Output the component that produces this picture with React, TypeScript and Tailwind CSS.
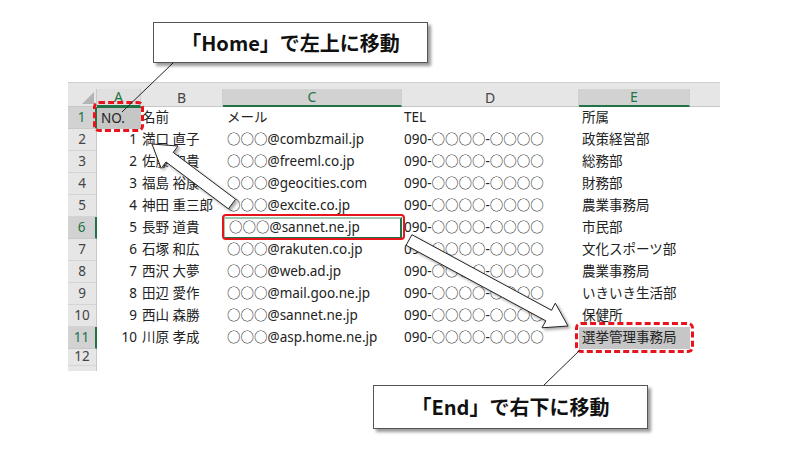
import React from "react";

const rows: [string, string, string, string, string][] = [
  ["NO.", "名前", "メール", "TEL", "所属"],
  ["1", "満口 直子", "○○○@combzmail.jp", "090-○○○○-○○○○", "政策経営部"],
  ["2", "佐藤 和貴", "○○○@freeml.co.jp", "090-○○○○-○○○○", "総務部"],
  ["3", "福島 裕康", "○○○@geocities.com", "090-○○○○-○○○○", "財務部"],
  ["4", "神田 重三郎", "○○○@excite.co.jp", "090-○○○○-○○○○", "農業事務局"],
  ["5", "長野 道貴", "○○○@sannet.ne.jp", "090-○○○○-○○○○", "市民部"],
  ["6", "石塚 和広", "○○○@rakuten.co.jp", "090-○○○○-○○○○", "文化スポーツ部"],
  ["7", "西沢 大夢", "○○○@web.ad.jp", "090-○○○○-○○○○", "農業事務局"],
  ["8", "田辺 愛作", "○○○@mail.goo.ne.jp", "090-○○○○-○○○○", "いきいき生活部"],
  ["9", "西山 森勝", "○○○@sannet.ne.jp", "090-○○○○-○○○○", "保健所"],
  ["10", "川原 孝成", "○○○@asp.home.ne.jp", "090-○○○○-○○○○", "選挙管理事務局"],
];

const cols = "grid grid-cols-[29px_44px_82px_179px_177px_111px_1fr]";

function arrow(tx: number, ty: number, hx: number, hy: number, sw = 6, hw = 14, hl = 22) {
  const dx = hx - tx;
  const dy = hy - ty;
  const len = Math.hypot(dx, dy);
  const ux = dx / len;
  const uy = dy / len;
  const px = -uy;
  const py = ux;
  const b = len - hl;
  const local: [number, number][] = [
    [0, -sw], [b, -sw], [b, -hw], [len, 0], [b, hw], [b, sw], [0, sw],
  ];
  return local
    .map(([a, p]) => `${(tx + a * ux + p * px).toFixed(1)},${(ty + a * uy + p * py).toFixed(1)}`)
    .join(" ");
}

function RowHead({ n, sel }: { n: string; sel?: boolean }) {
  return (
    <div
      className={
        sel
          ? "flex items-center justify-center bg-[#d2d2d2] text-[#217346] border-r-2 border-r-[#217346] border-b border-b-[#c8c8c8]"
          : "flex items-center justify-center bg-[#e6e6e6] text-[#444] border-r border-r-[#c8c8c8] border-b border-b-[#d4d4d4]"
      }
    >
      {n}
    </div>
  );
}

export default function App() {
  return (
    <div
      className="relative w-[800px] h-[450px] bg-white overflow-hidden text-[13.5px] text-[#222]"
      style={{ fontFamily: '"Noto Sans", "Noto Sans CJK JP", sans-serif' }}
    >
      {/* sheet */}
      <div className="ml-[68px] mt-[82px] w-[652px] h-[289px] overflow-hidden">
        <div className="h-[7px] bg-[#e6e6e6] border-t border-[#d0d0d0]" />
        <div className={`${cols} h-[18px] bg-[#e6e6e6] text-[#444] text-[14px] leading-none`}>
          <div className="relative border-r border-[#c8c8c8] border-b border-b-[#c8c8c8]">
            <svg className="absolute right-[2px] bottom-[2px]" width="12" height="12">
              <polygon points="12,0 12,12 0,12" fill="#b4b4b4" />
            </svg>
          </div>
          <div className="flex items-center justify-center text-[#217346] bg-[#e0e0e0] border-r border-[#d0d0d0] border-b-2 border-b-[#217346]">A</div>
          <div className="flex items-center justify-center border-r border-[#d0d0d0] border-b border-b-[#c8c8c8]">B</div>
          <div className="flex items-center justify-center text-[#217346] bg-[#d2d2d2] border-r border-[#d0d0d0] border-b-2 border-b-[#217346]">C</div>
          <div className="flex items-center justify-center border-r border-[#d0d0d0] border-b border-b-[#c8c8c8]">D</div>
          <div className="flex items-center justify-center text-[#217346] bg-[#d2d2d2] border-r border-[#d0d0d0] border-b-2 border-b-[#217346]">E</div>
          <div className="border-b border-b-[#c8c8c8]" />
        </div>
        {rows.map((r, i) => {
          const rn = i + 1;
          const sel = rn === 1 || rn === 6 || rn === 11;
          return (
            <div key={rn} className={`${cols} h-[22px] leading-none`}>
              <RowHead n={String(rn)} sel={sel} />
              <div
                className={`flex items-center whitespace-nowrap ${
                  rn === 1 ? "bg-[#c6c6c6] pl-[4px] border-t border-t-[#217346]" : "justify-end pr-[4px]"
                }`}
              >
                {r[0]}
              </div>
              <div className="flex items-center pl-[1px] whitespace-nowrap">{r[1]}</div>
              <div
                className={`flex items-center pl-[4px] whitespace-nowrap ${
                  rn === 6 ? "border-2 border-[#217346] border-l-[#9cc9b0] border-t-[#9cc9b0]" : ""
                }`}
              >
                {r[2]}
              </div>
              <div className="flex items-center pl-[2px] whitespace-nowrap">{r[3]}</div>
              <div
                className={`flex items-center pl-[3px] whitespace-nowrap ${
                  rn === 11 ? "bg-[#c6c6c6]" : ""
                }`}
              >
                {r[4]}
              </div>
              <div />
            </div>
          );
        })}
        <div className={`${cols} h-[17px] leading-none`}>
          <RowHead n="12" />
        </div>
        <div className={`${cols} h-[17px] leading-none`}>
          <div className="bg-[#e6e6e6] border-r border-r-[#c8c8c8]" />
        </div>
      </div>

      {/* highlight frames */}
      <div className="absolute left-[93px] top-[101px] w-[51px] h-[31px] border-[3px] border-dashed border-[#e8141c] rounded-[6px]" />
      <div className="absolute left-[575px] top-[322px] w-[119px] h-[31px] border-[3px] border-dashed border-[#e8141c] rounded-[6px]" />
      <div className="absolute left-[222px] top-[214px] w-[183px] h-[26px] border-2 border-[#e8141c] rounded-[4px]" />

      {/* arrows and leader lines */}
      <svg className="absolute left-0 top-0" width="800" height="450">
        <defs>
          <filter id="sh" x="-20%" y="-20%" width="140%" height="140%">
            <feDropShadow dx="2" dy="2" stdDeviation="1.5" floodColor="#000" floodOpacity="0.35" />
          </filter>
        </defs>
        <polygon points={arrow(232, 204, 152, 144)} fill="#fff" stroke="#222" strokeWidth="1" filter="url(#sh)" />
        <polygon points={arrow(409, 240, 568, 326)} fill="#fff" stroke="#222" strokeWidth="1" filter="url(#sh)" />
        <line x1="173" y1="63" x2="122" y2="112" stroke="#222" strokeWidth="1" />
        <line x1="580" y1="350" x2="543" y2="386" stroke="#222" strokeWidth="1" />
      </svg>

      {/* callouts */}
      <div
        className="absolute left-[153px] top-[22px] w-[275px] h-[41px] bg-white border border-[#555] shadow-[3px_3px_3px_rgba(0,0,0,0.4)] flex items-center justify-center font-bold text-[20px] text-[#111]"
        style={{ fontFamily: '"Noto Sans CJK JP", sans-serif' }}
      >
        「Home」で左上に移動
      </div>
      <div
        className="absolute left-[373px] top-[385px] w-[275px] h-[44px] bg-white border border-[#555] shadow-[3px_3px_3px_rgba(0,0,0,0.4)] flex items-center justify-center font-bold text-[20px] text-[#111]"
        style={{ fontFamily: '"Noto Sans CJK JP", sans-serif' }}
      >
        「End」で右下に移動
      </div>
    </div>
  );
}
